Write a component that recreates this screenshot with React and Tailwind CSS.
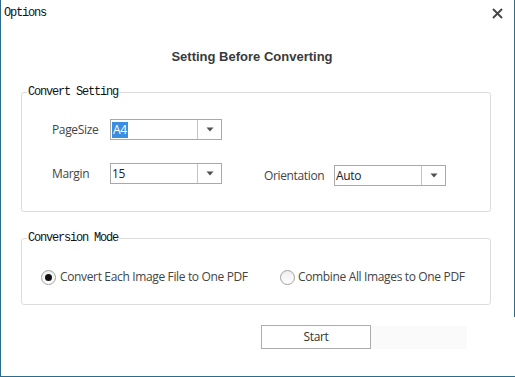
import React from "react";

const Arrow = () => (
  <svg width="8" height="5" viewBox="0 0 8 5">
    <path d="M0.5 0.5 L7.5 0.5 L4 4.5 Z" fill="#505050" />
  </svg>
);

const Dropdown = ({ value, selected, className = "" }) => (
  <div className={`flex h-[21px] w-[112px] border border-[#a9a9a9] bg-white ${className}`}>
    <div className="flex flex-1 items-center pl-[1px]">
      {selected ? (
        <span className="bg-[#3a8ee2] px-[1px] text-[12px] leading-[16px] tracking-[-0.3px] text-white">{value}</span>
      ) : (
        <span className="text-[12px] leading-[16px] tracking-[-0.3px] text-[#222]">{value}</span>
      )}
    </div>
    <div className="flex w-[24px] items-center justify-center border-l border-[#c4c4c4]">
      <Arrow />
    </div>
  </div>
);

const Radio = ({ checked }) => (
  <div className="flex h-[15px] w-[15px] items-center justify-center rounded-full border border-[#a0a0a0] bg-gradient-to-b from-[#eeeeee] to-white">
    {checked && <div className="h-[7px] w-[7px] rounded-full bg-[#111]" />}
  </div>
);

const label = "text-[12px] leading-[16px] tracking-[-0.35px] text-[#444]";
const legend = "ml-[5px] px-[1px] text-[12px] leading-[13px] tracking-[-1.2px] text-[#111]";

export default function App() {
  const mono = { fontFamily: '"Liberation Mono", "DejaVu Sans Mono", monospace' };
  return (
    <div
      className="flex h-[377px] w-[515px] border-b border-l border-[#2e6b8b] bg-white text-[#333]"
      style={{ fontFamily: '"Open Sans", "Noto Sans", sans-serif' }}
    >
      <div className="flex flex-1 flex-col">
        <div className="flex h-[26px] items-center justify-between pl-[3px] pr-[11px]">
          <span className="text-[12px] leading-[13px] tracking-[-1.2px] text-[#111]" style={mono}>
            Options
          </span>
          <svg width="11" height="11" viewBox="0 0 11 11">
            <path d="M1 1 L10 10 M10 1 L1 10" stroke="#444" strokeWidth="1.8" />
          </svg>
        </div>

        <div
          className="mt-[23px] pr-[11px] text-center text-[13px] font-bold leading-[16px] text-[#3a3a3a]"
          style={{ fontFamily: '"Liberation Sans", Arial, sans-serif' }}
        >
          Setting Before Converting
        </div>

        <fieldset className="ml-[20px] mt-[21px] w-[470px] rounded-[3px] border border-[#dcdcdc]">
          <legend className={legend} style={mono}>
            Convert Setting
          </legend>
          <div className="pb-[25px] pl-[30px] pt-[20px]">
            <div className="flex items-center">
              <span className={`w-[58px] ${label}`}>PageSize</span>
              <Dropdown value="A4" selected />
            </div>
            <div className="mt-[23px] flex items-start">
              <div className="flex items-center">
                <span className={`w-[58px] ${label}`}>Margin</span>
                <Dropdown value="15" />
              </div>
              <div className="ml-[42px] mt-[2px] flex items-center">
                <span className={`w-[70px] ${label}`}>Orientation</span>
                <Dropdown value="Auto" />
              </div>
            </div>
          </div>
        </fieldset>

        <fieldset className="ml-[20px] mt-[20px] w-[470px] rounded-[3px] border border-[#dcdcdc]">
          <legend className={legend} style={mono}>
            Conversion Mode
          </legend>
          <div className="pb-[19px] pl-[19px] pt-[24px]">
            <div className="flex items-center">
              <div className="flex w-[239px] items-center gap-[4px]">
                <Radio checked />
                <span className={label}>Convert Each Image File to One PDF</span>
              </div>
              <div className="flex items-center gap-[3px]">
                <Radio />
                <span className={label}>Combine All Images to One PDF</span>
              </div>
            </div>
          </div>
        </fieldset>

        <div className="ml-[260px] mt-[20px] flex items-start">
          <button className="flex h-[24px] w-[110px] items-center justify-center border border-[#adadad] bg-white text-[12px] tracking-[-0.3px] text-[#333]">
            Start
          </button>
          <div className="mt-[1px] h-[23px] w-[96px] bg-[#fafafa]" />
        </div>
      </div>
      <div className="w-px">
        <div className="h-[317px] bg-[#2e6b8b]" />
      </div>
    </div>
  );
}
